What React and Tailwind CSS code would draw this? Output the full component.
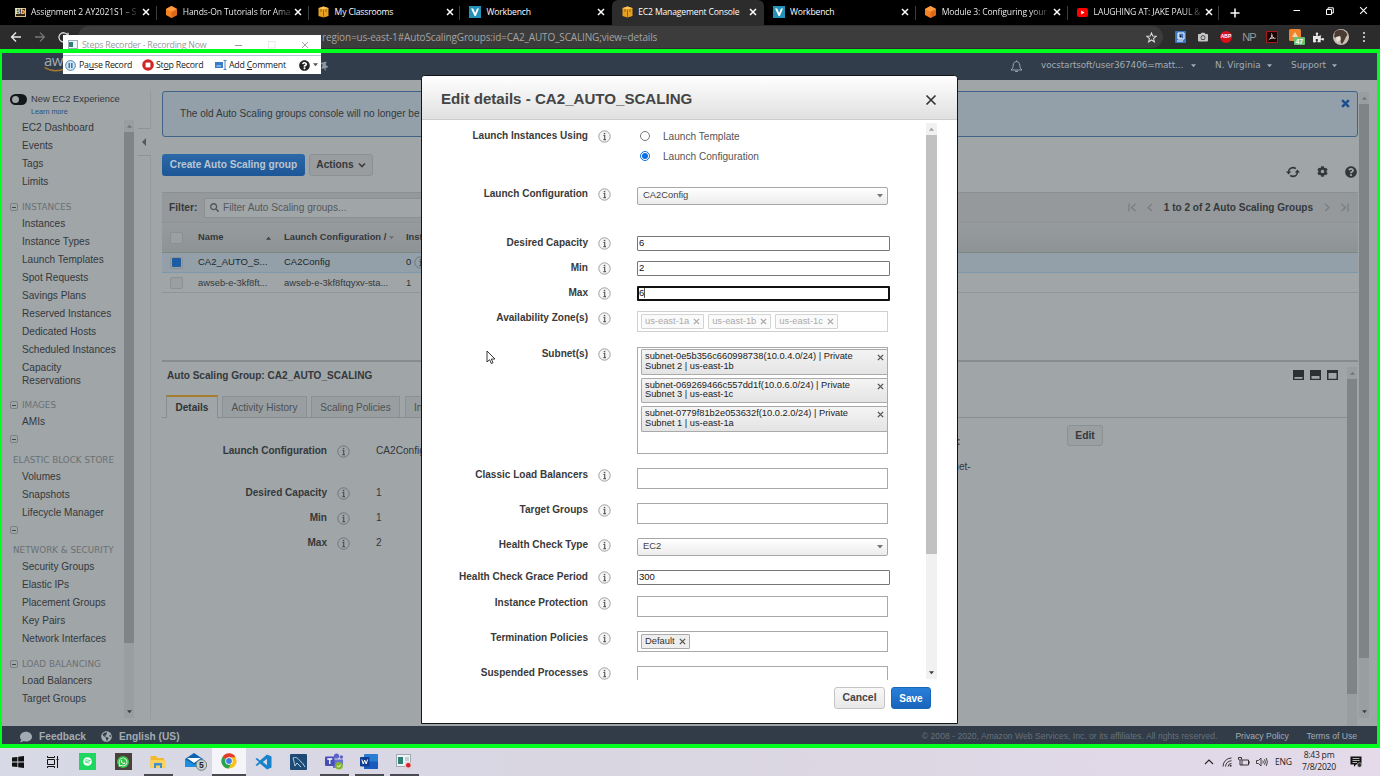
import React from "react";
import { FaSearch, FaCog, FaQuestionCircle, FaComment, FaGlobeAmericas, FaPuzzlePiece, FaCamera, FaWhatsapp, FaThumbtack, FaSpotify } from "react-icons/fa";

const SvgX = ({ s = 8, w = 1.4, c = "#fff" }) => (
  <svg width={s} height={s} viewBox="0 0 8 8" className="shrink-0"><path d="M1 1L7 7M7 1L1 7" stroke={c} strokeWidth={w} fill="none" /></svg>
);
const Caret = ({ c = "#666", up, w = 6 }) => (
  <svg width={w} height="4" viewBox="0 0 6 4" className="shrink-0"><path d={up ? "M0 4L3 0.5L6 4Z" : "M0 0L3 3.5L6 0Z"} fill={c} /></svg>
);
const Chevron = ({ c = "#9aa3ab", s = 7 }) => (
  <svg width={s} height={s} viewBox="0 0 8 8" className="shrink-0"><path d="M1 2.5L4 5.5L7 2.5" stroke={c} strokeWidth="1.6" fill="none" /></svg>
);
const Info = ({ dim }) => (
  <svg width="13" height="13" viewBox="0 0 13 13" className="shrink-0">
    <circle cx="6.5" cy="6.5" r="5.7" fill={dim ? "none" : "#f6f6f6"} stroke={dim ? "#6b7074" : "#949494"} strokeWidth="0.9" />
    <path d="M5.4 5.5H6.7V9.6M5.4 9.6H8" stroke={dim ? "#4c5053" : "#585858"} strokeWidth="1.15" fill="none" />
    <rect x="5.8" y="2.9" width="1.5" height="1.4" fill={dim ? "#4c5053" : "#585858"} />
  </svg>
);

/* ---------- browser tabs ---------- */
const BbIcon = () => (
  <span className="flex h-[9px] w-[11px] items-center justify-center border border-[#d8c08a] bg-[#30250f] font-['Liberation_Serif',serif] text-[8px] font-bold leading-none text-[#f4e6c2]">Bb</span>
);
const HexIcon = () => (
  <svg width="11" height="12" viewBox="0 0 11 12"><path d="M5.5 0L11 3V9L5.5 12L0 9V3Z" fill="#f58220" /><path d="M0 3L5.5 6L11 3L5.5 0Z" fill="#ff9b3d" /><path d="M5.5 6V12L11 9V3Z" fill="#e0661a" /></svg>
);
const CubeIcon = () => (
  <svg width="11" height="12" viewBox="0 0 11 12"><path d="M5.5 0.5L10.5 2V10L5.5 11.5L0.5 10V2Z" fill="#e8a020" /><path d="M0.5 2.2L5.5 3.6L10.5 2.2L5.5 0.6Z" fill="#ffc45a" /><path d="M5.5 3.6V11.4M3 3V6M8 3V6" stroke="#7a4b00" strokeWidth="0.7" /></svg>
);
const VIcon = () => (
  <svg width="12" height="12" viewBox="0 0 12 12"><rect width="12" height="12" fill="#2492b8" /><path d="M2 2.5H4.2L6.2 7L8 2.5H10L6.8 10H5.6Z" fill="#fff" /></svg>
);
const YtIcon = () => (
  <svg width="11" height="9" viewBox="0 0 11 9"><rect width="11" height="9" rx="2" fill="#f00" /><path d="M4.2 2.5L7.5 4.5L4.2 6.5Z" fill="#fff" /></svg>
);
const TABS = [
  [BbIcon, "Assignment 2 AY2021S1 – S", "fade"], [HexIcon, "Hands-On Tutorials for Ama", "fade"], [CubeIcon, "My Classrooms"], [VIcon, "Workbench"],
  [CubeIcon, "EC2 Management Console", "on"], [VIcon, "Workbench"], [HexIcon, "Module 3: Configuring your", "fade"], [YtIcon, "LAUGHING AT: JAKE PAUL &", "fade"],
];

function TabBar() {
  return (
    <div className="flex h-[25px] shrink-0 bg-black pl-[5px] font-['Open_Sans',sans-serif] text-white">
      {TABS.map(([Icon, t, kind], i) => (
        <div key={i} className={"flex w-[151.8px] items-center " + (kind === "on" ? "rounded-t-md bg-[#2c2c2c]" : "")}>
          <div className="flex w-full items-center pl-[9px]">
            <div className="flex w-[12px] justify-center"><Icon /></div>
            <div className="ml-[5px] w-[108px]">
              <span className={"block w-fit whitespace-nowrap text-[8.6px] tracking-[-0.16px] " + (kind === "fade" ? "bg-linear-to-r from-white from-85% to-[#333] bg-clip-text text-transparent" : "")}>{t}</span>
            </div>
            <div className="ml-[3px]"><SvgX s={8} w={1.5} /></div>
          </div>
          {kind !== "on" && i !== 3 && <div className="h-[14px] w-px shrink-0 bg-[#3c3c3c]" />}
        </div>
      ))}
      <div className="flex items-center pl-[11px]">
        <svg width="10" height="10" viewBox="0 0 10 10"><path d="M5 0.5V9.5M0.5 5H9.5" stroke="#fff" strokeWidth="1.5" /></svg>
      </div>
      <div className="ml-auto flex h-[21px] items-center gap-[25px] pr-[12px]">
        <svg width="8" height="8" viewBox="0 0 8 8"><path d="M0.5 3.5H7" stroke="#fff" /></svg>
        <svg width="8" height="8" viewBox="0 0 8 8"><path d="M0.5 2.5H5.5V7.5H0.5ZM2 2.5V0.8H7.3V6H5.5" stroke="#fff" fill="none" /></svg>
        <SvgX s={9} w={1} />
      </div>
    </div>
  );
}

function Toolbar() {
  return (
    <div className="flex h-[24px] shrink-0 items-center bg-[#2c2c2c]">
      <div className="flex w-[78px] items-center gap-[12px] pl-[10px]">
        <svg width="12" height="12" viewBox="0 0 12 12"><path d="M11 6H2M6 1.6L1.6 6L6 10.4" stroke="#e8e8e8" strokeWidth="1.4" fill="none" /></svg>
        <svg width="12" height="12" viewBox="0 0 12 12"><path d="M1 6H10M6 1.6L10.4 6L6 10.4" stroke="#777" strokeWidth="1.3" fill="none" /></svg>
        <svg width="11" height="11" viewBox="0 0 11 11"><path d="M9.5 3A4.6 4.6 0 1 0 10 6.5M10 0.8V3.8H7" stroke="#ddd" strokeWidth="1.3" fill="none" /></svg>
      </div>
      <div className="flex h-[22px] w-[1085px] items-center rounded-full bg-[#3c3c3c]">
        <span className="ml-[244px] whitespace-nowrap pt-px font-['Open_Sans',sans-serif] text-[10px] tracking-[-0.15px] text-[#a3a3a3]">region=us-east-1#AutoScalingGroups:id=CA2_AUTO_SCALING;view=details</span>
        <svg className="ml-auto mr-[6px]" width="11" height="11" viewBox="0 0 12 12"><path d="M6 1L7.4 4.5L11.2 4.7L8.2 7.1L9.2 10.8L6 8.7L2.8 10.8L3.8 7.1L0.8 4.7L4.6 4.5Z" stroke="#ddd" strokeWidth="1.1" fill="none" /></svg>
      </div>
      <div className="flex items-center pl-[11px]">
        <div className="flex w-[12px] justify-center"><svg width="11" height="12" viewBox="0 0 11 12"><rect width="11" height="12" rx="1" fill="#3a74c4" /><path d="M3 2H9V8H3ZM2 10H8" stroke="#fff" fill="none" /><path d="M4 2V7H7" stroke="#fff" /></svg></div>
        <div className="ml-[11px] flex w-[12px] justify-center"><FaCamera size={10} color="#c4c4c4" /></div>
        <div className="ml-[11px] flex h-[12px] w-[12px] items-center justify-center rounded-full bg-[#d8101c] font-['Liberation_Sans',sans-serif] text-[5px] font-bold text-white">ABP</div>
        <div className="ml-[11px] flex w-[12px] justify-center font-['Liberation_Sans_Narrow','Liberation_Sans',sans-serif] text-[11px] tracking-[-1px] text-[#9a9a9a]">NP</div>
        <div className="ml-[11px] flex w-[12px] justify-center"><svg width="12" height="12" viewBox="0 0 12 12"><rect x="0.5" y="0.5" width="11" height="11" fill="#1c0404" stroke="#a01818" /><path d="M5.5 2.5C7 5 4 8 2.8 9M5.8 4C6 6.5 8 7.5 9.5 7.3M4 7.5L8 6.8" stroke="#eee" strokeWidth="0.9" fill="none" /></svg></div>
        <div className="ml-[10px] flex w-[17px] justify-center"><svg width="17" height="16" viewBox="0 0 17 16"><rect x="1" y="0" width="12" height="12" rx="1.5" fill="#f0822a" /><path d="M4 8L7 3L10 8Z" fill="#fbd4ae" /><rect x="6" y="8" width="11" height="8" rx="1" fill="#6fbf73" /><text x="7.4" y="14.6" fontSize="7" fontFamily="Liberation Sans, sans-serif" fontWeight="bold" fill="#fff">47</text></svg></div>
        <div className="ml-[7px] flex w-[12px] justify-center"><FaPuzzlePiece size={11} color="#e6e6e6" /></div>
        <svg className="ml-[9px]" width="16" height="16" viewBox="0 0 16 16"><circle cx="8" cy="8" r="8" fill="#c9beb4" /><path d="M2 3C6 -1 13 1 14.5 6C12 8 12 12 9 15C6 13 9 9 7 7C5 9 3 9 1 8Z" fill="#4a3a32" /><path d="M3 8L7 7L7.5 11L4 13Z" fill="#ece4dc" /></svg>
        <svg className="ml-[13px]" width="4" height="12" viewBox="0 0 4 12"><circle cx="2" cy="2" r="1.1" fill="#ddd" /><circle cx="2" cy="6" r="1.1" fill="#ddd" /><circle cx="2" cy="10" r="1.1" fill="#ddd" /></svg>
      </div>
    </div>
  );
}

/* ---------- console page ---------- */
function AwsHeader() {
  return (
    <div className="flex h-[31px] shrink-0 items-center bg-[#313d4b] pt-[3px] font-['DejaVu_Sans',sans-serif] text-[8.9px] text-[#a3abb2]">
      <div className="flex w-[320px] flex-col pl-[44px]">
        <span className="mt-[-6px] font-['Open_Sans',sans-serif] text-[15px] leading-[13px] tracking-[-0.5px]">aws</span>
        <svg width="24" height="5" viewBox="0 0 24 5"><path d="M0.5 0.5Q10 6.5 22 1.5" stroke="#a4792f" strokeWidth="1.4" fill="none" /></svg>
      </div>
      <FaThumbtack size={9} className="-rotate-12" color="#8d98a2" />
      <svg className="ml-[681px] shrink-0" width="13" height="13" viewBox="0 0 13 13"><path d="M1 10H12C10 8.5 10 7 9.8 5.2C9.6 3 8.4 1.6 6.5 1.6S3.4 3 3.2 5.2C3 7 3 8.5 1 10ZM5.2 11.5H7.8M6.5 0.5V1.6" stroke="#a3abb2" fill="none" /></svg>
      <span className="ml-[18px] w-[150px] whitespace-nowrap tracking-[-0.12px]">vocstartsoft/user367406=matt...</span><Caret c="#a3abb2" w={5} />
      <span className="ml-[19px] w-[52px] whitespace-nowrap">N. Virginia</span><Caret c="#a3abb2" w={5} />
      <span className="ml-[19px] w-[41px]">Support</span><Caret c="#a3abb2" w={5} />
    </div>
  );
}

const Minus = () => (
  <span className="flex h-[8px] w-[8px] shrink-0 items-center justify-center rounded-[2px] border border-[#7b8083]"><span className="h-px w-[4px] bg-[#44484b]" /></span>
);
const Head = ({ children, h = "h-[24px]" }) => (
  <div className={"flex items-end " + h}><div className="flex h-[15px] items-center gap-[4px] font-['DejaVu_Sans',sans-serif] text-[8.8px] text-[#6b7073]"><Minus />{children}</div></div>
);
const HeadSplit = ({ children, h }) => (
  <>
    <div className="flex h-[18px] items-center pb-px"><Minus /></div>
    <div className={"flex items-center whitespace-nowrap pl-[3px] pt-[4px] font-['DejaVu_Sans',sans-serif] text-[8.8px] text-[#6b7073] " + h}>{children}</div>
  </>
);
const SideItem = ({ children }) => <div className="flex h-[18px] items-center whitespace-nowrap pl-[12px]">{children}</div>;

function Scroll({ track = "bg-[#9a9ea1]", thumb = "bg-[#7f8487]", h, up = "#6f7477", down = "#3c4043", w = "w-[10px]", showDown = true }) {
  return (
    <div className={"flex shrink-0 flex-col items-center " + w + " " + track}>
      <div className="flex h-[12px] items-center"><Caret up c={up} w={5} /></div>
      <div className={"w-full " + thumb + " " + h} />
      {showDown && <div className="mt-auto flex h-[12px] items-center"><Caret c={down} w={5} /></div>}
    </div>
  );
}

function SideList() {
  return (
    <div className="w-[114px] pt-[0.6px] text-[10.1px] text-[#34383b]">
      {["EC2 Dashboard", "Events", "Tags", "Limits"].map((t) => <SideItem key={t}>{t}</SideItem>)}
      <Head>INSTANCES</Head>
      {["Instances", "Instance Types", "Launch Templates", "Spot Requests", "Savings Plans", "Reserved Instances", "Dedicated Hosts", "Scheduled Instances"].map((t) => <SideItem key={t}>{t}</SideItem>)}
      <div className="h-[31px] pl-[12px] pt-[2px] leading-[13px]">Capacity<br />Reservations</div>
      <Head h="h-[23px]">IMAGES</Head>
      <SideItem>AMIs</SideItem>
      <HeadSplit h="h-[19px]">ELASTIC BLOCK STORE</HeadSplit>
      {["Volumes", "Snapshots", "Lifecycle Manager"].map((t) => <SideItem key={t}>{t}</SideItem>)}
      <HeadSplit h="h-[18px]">NETWORK &amp; SECURITY</HeadSplit>
      {["Security Groups", "Elastic IPs", "Placement Groups", "Key Pairs", "Network Interfaces"].map((t) => <SideItem key={t}>{t}</SideItem>)}
      <Head>LOAD BALANCING</Head>
      {["Load Balancers", "Target Groups"].map((t) => <SideItem key={t}>{t}</SideItem>)}
    </div>
  );
}

function Nav() {
  return (
    <div className="flex w-[134px] shrink-0 flex-col pl-[10px]">
      <div className="flex h-[38px] shrink-0 flex-col pt-[12px]">
        <div className="flex h-[15px] items-center">
          <div className="flex h-[11px] w-[17px] items-center rounded-full bg-[#15181b] p-[2px]"><div className="h-[7px] w-[7px] rounded-full bg-[#a0a5a8]" /></div>
          <span className="ml-[4px] whitespace-nowrap text-[9.35px]">New EC2 Experience</span>
        </div>
        <span className="ml-[21px] text-[7.2px] leading-[10px] text-[#27517e]">Learn more</span>
      </div>
      <div className="flex h-[600px]">
        <SideList />
        <div className="flex pt-[2px]"><Scroll h="h-[511px]" /></div>
      </div>
    </div>
  );
}

const Field = ({ label, value, h }) => (
  <div className={"flex items-start " + h}>
    <span className="w-[165px] text-right text-[10.05px] font-bold leading-[14px]">{label}</span>
    <div className="ml-[10px] mt-[1px]"><Info dim /></div>
    <span className="ml-[26px] text-[10.1px] leading-[14px]">{value}</span>
  </div>
);

const WinIcon = ({ y }) => (
  <svg width="11" height="10" viewBox="0 0 11 10"><rect width="11" height="10" fill="#2c3033" /><rect x="1.5" y={y} width="8" height={8.8 - y} fill="#a0a5a8" /></svg>
);

function Main() {
  return (
    <div className="flex w-[1196px] shrink-0 flex-col pt-[11px]">
      <div className="flex h-[46px] shrink-0 items-center rounded-[3px] border border-[#3f6488] bg-[#93a0a9] pl-[17px]">
        <span className="whitespace-nowrap text-[10.1px]">The old Auto Scaling groups console will no longer be</span>
        <div className="ml-auto mr-[7px] self-start pt-[7px]"><SvgX s={9} w={2.2} c="#1c4f90" /></div>
      </div>
      <div className="flex h-[55px] shrink-0 items-center pt-px">
        <div className="flex h-[22px] w-[143px] items-center justify-center whitespace-nowrap rounded-[3px] bg-linear-to-b from-[#2c69a8] to-[#1d5696] text-[10.15px] font-bold text-[#b9c6d2]">Create Auto Scaling group</div>
        <div className="ml-[4px] flex h-[22px] w-[64px] items-center justify-center gap-[4px] rounded-[3px] border border-[#8c9194] bg-[#999da0] text-[10.2px] font-bold">Actions<Chevron c="#3a3e41" s={8} /></div>
        <div className="ml-auto flex items-center text-[#33373a]">
          <div className="flex items-center gap-[17px] pr-px pt-[13px]">
            <svg width="14" height="12" viewBox="0 0 14 12"><path d="M2.6 6A4.5 4.5 0 0 1 7 1.6Q8.6 1.6 9.8 2.6M11.4 6A4.5 4.5 0 0 1 7 10.4Q5.4 10.4 4.2 9.4" stroke="#33373a" strokeWidth="1.6" fill="none" /><path d="M0 5.6L2.6 8.6L5.2 5.6ZM8.8 6.4L11.4 3.4L14 6.4Z" fill="#33373a" /></svg>
            <FaCog size={11} /><FaQuestionCircle size={12} />
          </div>
        </div>
      </div>
      <div className="flex h-[30px] shrink-0 items-center border-t border-[#8b9093] bg-[#95999c] pl-[7px]">
        <span className="w-[35px] text-[10.2px] font-bold">Filter:</span>
        <div className="flex h-[20px] w-[350px] items-center gap-[4px] rounded-[2px] border border-[#8b9093] bg-[#a0a5a8] pl-[5px] text-[#53585b]"><FaSearch size={9} /><span className="text-[10.1px]">Filter Auto Scaling groups...</span></div>
        <div className="ml-auto flex items-center pr-[9px]">
          <svg width="9" height="9" viewBox="0 0 9 9"><path d="M1 0.5V8.5M7.5 1L3.5 4.5L7.5 8" stroke="#777c7f" strokeWidth="1.2" fill="none" /></svg>
          <svg className="ml-[9px]" width="9" height="9" viewBox="0 0 9 9"><path d="M6 1L2 4.5L6 8" stroke="#777c7f" strokeWidth="1.2" fill="none" /></svg>
          <span className="ml-[9px] whitespace-nowrap text-[10.05px] font-bold">1 to 2 of 2 Auto Scaling Groups</span>
          <svg className="ml-[9px]" width="9" height="9" viewBox="0 0 9 9"><path d="M3 1L7 4.5L3 8" stroke="#777c7f" strokeWidth="1.2" fill="none" /></svg>
          <svg className="ml-[9px]" width="9" height="9" viewBox="0 0 9 9"><path d="M8 0.5V8.5M1.5 1L5.5 4.5L1.5 8" stroke="#777c7f" strokeWidth="1.2" fill="none" /></svg>
        </div>
      </div>
      <div className="flex h-[31px] shrink-0 items-center border-y border-t-[#8d9295] border-b-[#7f8487] bg-linear-to-b from-[#979b9e] to-[#8e9396] text-[9.35px] font-bold">
        <div className="ml-[8px] h-[12px] w-[13px] rounded-[2px] border border-[#8b9093] bg-[#9ba0a3]" />
        <span className="ml-[15px] w-[68px]">Name</span><Caret up c="#3c4043" w={5} />
        <span className="ml-[13px] w-[105px] whitespace-nowrap">Launch Configuration /</span><Caret c="#6a6f72" w={5} />
        <span className="ml-[12px]">Instances</span>
      </div>
      <div className="flex h-[20px] shrink-0 items-center border-b border-[#7f98ab] bg-[#93a0a9] text-[9.5px] text-[#22272b]">
        <div className="ml-[8px] flex h-[12px] w-[13px] items-center justify-center rounded-[2px] border border-[#8b9093]"><div className="h-[9px] w-[9px] rounded-[1px] bg-[#1c5ca3]" /></div>
        <span className="ml-[15px] w-[86px] whitespace-nowrap">CA2_AUTO_S...</span><span className="w-[122px]">CA2Config</span><span className="w-[8px]">0</span><Info dim />
      </div>
      <div className="flex h-[20px] shrink-0 items-center border-b border-[#90959a] pt-px text-[9.4px]">
        <div className="ml-[8px] h-[12px] w-[13px] rounded-[2px] border border-[#8b9093] bg-[#9a9fa2]" />
        <span className="ml-[15px] w-[86px] whitespace-nowrap">awseb-e-3kf8ft...</span><span className="w-[122px] whitespace-nowrap">awseb-e-3kf8ftqyxv-sta...</span><span>1</span>
      </div>
      <div className="h-[67px] shrink-0" />
      <div className="h-[2px] shrink-0 bg-[#868b8e]" />
      <div className="flex min-h-0 flex-1">
        <div className="flex w-[1185px] flex-col">
          <div className="flex h-[32px] items-center pl-[5px] pr-[9px]">
            <span className="pb-[5px] text-[10.05px] font-bold">Auto Scaling Group: CA2_AUTO_SCALING</span>
            <div className="ml-auto flex gap-[6px] pb-[6px]"><WinIcon y={7} /><WinIcon y={6} /><WinIcon y={3} /></div>
          </div>
          <div className="flex h-[24px] items-end border-b border-[#888d90] pl-[4px] text-[10.05px] text-[#4c5154]">
            <div className="-mb-px flex h-[23px] w-[52px] items-center justify-center border border-b-0 border-t-2 border-[#888d90] border-t-[#a57c2e] bg-[#a0a5a8] font-bold text-[#2f3336]">Details</div>
            <div className="ml-[4px] flex h-[21px] w-[85px] items-center justify-center whitespace-nowrap border border-b-0 border-[#8b9093] bg-[#999ea1] pt-px">Activity History</div>
            <div className="ml-[4px] flex h-[21px] w-[89px] items-center justify-center whitespace-nowrap border border-b-0 border-[#8b9093] bg-[#999ea1] pt-px">Scaling Policies</div>
            <div className="ml-[5px] flex h-[21px] w-[64px] items-center border border-b-0 border-[#8b9093] bg-[#999ea1] pl-[8px] pt-px">Instances</div>
          </div>
          <div className="flex justify-between pt-[7px]">
            <div className="pt-[19px]">
              <Field label="Launch Configuration" value="CA2Config" h="h-[42px]" />
              <Field label="Desired Capacity" value="1" h="h-[25px]" />
              <Field label="Min" value="1" h="h-[25px]" />
              <Field label="Max" value="2" h="h-[25px]" />
            </div>
            <div className="flex pr-[244px]">
              <div className="flex w-[133px] flex-col pt-[10px] text-[10.1px]">
                <span className="pl-[23px] font-bold leading-[14px]">:</span>
                <span className="mt-[11px] pl-[3px] leading-[14px]">subnet-</span>
              </div>
              <div className="flex h-[21px] w-[36px] items-center justify-center rounded-[3px] border border-[#8c9194] bg-[#9a9fa2] text-[10.3px] font-bold">Edit</div>
            </div>
          </div>
        </div>
        <div className="flex pt-[5px]"><Scroll h="h-[315px]" showDown={false} /></div>
      </div>
    </div>
  );
}

function Console() {
  return (
    <div className="flex h-[646px] shrink-0 bg-[#a0a5a8] font-['Liberation_Sans',sans-serif] text-[#34383b]">
      <Nav />
      <div className="flex w-[28px] shrink-0 flex-col pl-[4px] pt-[11px]">
        <div className="h-[37px] w-[13px] border-r border-[#959a9d]" />
        <div className="flex h-[28px] w-[13px] items-center border-y border-[#8f9497] pl-[4px]"><svg width="4" height="8" viewBox="0 0 4 8"><path d="M4 0V8L0 4Z" fill="#55595c" /></svg></div>
        <div className="h-[563px] w-[13px] border-r border-[#959a9d]" />
      </div>
      <Main />
      <div className="flex h-[638px] pl-px pt-[12px]"><Scroll h="h-[554px]" /></div>
    </div>
  );
}

function Footer() {
  return (
    <div className="flex h-[22px] shrink-0 items-start bg-[#313c48] pt-[2px] font-['Liberation_Sans',sans-serif]">
      <div className="flex h-[17px] w-full items-center text-[10.2px] font-bold text-[#a3abb2]">
        <FaComment size={12} className="ml-[20px]" /><span className="ml-[7px] w-[62px]">Feedback</span>
        <FaGlobeAmericas size={11} /><span className="ml-[7px]">English (US)</span>
        <span className="ml-auto whitespace-nowrap text-[8.65px] font-normal text-[#66717b]">© 2008 - 2020, Amazon Web Services, Inc. or its affiliates. All rights reserved.</span>
        <span className="ml-[18px] w-[71px] whitespace-nowrap text-[8.6px] font-normal">Privacy Policy</span>
        <span className="mr-[23px] whitespace-nowrap text-[8.6px] font-normal">Terms of Use</span>
      </div>
    </div>
  );
}

/* ---------- dialog ---------- */
const Row = ({ label, h, children }) => (
  <div className={"flex shrink-0 items-start " + h}>
    <span className="w-[165px] whitespace-nowrap pt-[0.6px] text-right text-[10.05px] font-bold leading-[16px] text-[#3a3a3a]">{label}</span>
    <div className="ml-[10px] mt-[2.5px]"><Info /></div>
    <div className="ml-[26px] mt-px w-[253px]">{children}</div>
  </div>
);
const Select = ({ children }) => (
  <div className="flex h-[18px] w-[251px] items-center justify-between rounded-[2px] border border-[#a8a8a8] bg-linear-to-b from-white to-[#ececec] pl-[5px] pr-[4px] text-[9.4px] text-[#444]"><span className="pb-px">{children}</span><Caret c="#777" w={6} /></div>
);
const Input = ({ children, focus }) => (
  <div className={"flex h-[15px] w-[253px] items-center rounded-[1px] bg-white text-[9.5px] text-[#111] " + (focus ? "border-2 border-[#111]" : "border border-[#767676] pl-px")}>{children}{focus && <span className="h-[10px] w-px bg-[#555]" />}</div>
);
const Box = ({ children, dim }) => (
  <div className={"flex h-[21px] w-[251px] items-center gap-[4px] border bg-white pl-[3px] " + (dim ? "border-[#d0d0d0]" : "border-[#aaa]")}>{children}</div>
);
const Tag = ({ children, dim }) => (
  <div className={"flex h-[15px] items-center gap-[4px] rounded-[1px] border pl-[3px] pr-[3px] text-[9.35px] " + (dim ? "border-[#d4d4d4] bg-[#fafafa] text-[#aaa]" : "border-[#aaa] bg-[#eee] text-[#333]")}>{children}<SvgX s={7} w={1.5} c={dim ? "#aaa" : "#555"} /></div>
);
const Subnet = ({ a, b }) => (
  <div className="flex h-[25.5px] w-[247px] shrink-0 items-start justify-between rounded-[1px] border border-[#aaa] bg-linear-to-b from-[#f4f4f4] to-[#e4e4e4] pl-[3px] pr-[3px] pt-[2.4px] text-[9.3px] leading-[9.5px] text-[#222]">
    <div className="whitespace-nowrap">{a}<br />{b}</div>
    <div className="pt-[2px]"><SvgX s={7} w={1.6} c="#555" /></div>
  </div>
);
const Radio = ({ on }) => (
  <div className={"flex h-[10px] w-[10px] items-center justify-center rounded-full border " + (on ? "border-[#0a6fe0]" : "border-[#767676]")}>{on && <div className="h-[6px] w-[6px] rounded-full bg-[#0a6fe0]" />}</div>
);

function Dialog() {
  return (
    <div className="absolute left-[421px] top-[75px] flex h-[649px] w-[537px] flex-col rounded-t-[4px] border border-[#10151a] bg-white font-['Liberation_Sans',sans-serif]">
      <div className="flex h-[44px] shrink-0 items-center justify-between rounded-t-[3px] border-b border-[#ccc] bg-linear-to-b from-white to-[#e0e0e0] pl-[19px] pr-[20px] pt-[4px]">
        <span className="whitespace-nowrap text-[15.1px] font-bold text-[#444]">Edit details - CA2_AUTO_SCALING</span>
        <SvgX s={12} w={1.1} c="#333" />
      </div>
      <div className="flex h-[560px] shrink-0 overflow-hidden">
        <div className="flex w-[504px] flex-col pl-px pt-[7.5px]">
          <Row label="Launch Instances Using" h="h-[58px]">
            <div className="flex flex-col gap-[4px] pl-[3px] text-[10.1px] leading-[16px] text-[#555]">
              <div className="flex items-center"><div className="mb-[2px]"><Radio /></div><span className="ml-[13px]">Launch Template</span></div>
              <div className="flex items-center"><div className="mb-[2px]"><Radio on /></div><span className="ml-[13px]">Launch Configuration</span></div>
            </div>
          </Row>
          <Row label="Launch Configuration" h="h-[49px]"><Select>CA2Config</Select></Row>
          <Row label="Desired Capacity" h="h-[25px]"><Input>6</Input></Row>
          <Row label="Min" h="h-[25px]"><Input>2</Input></Row>
          <Row label="Max" h="h-[25px]"><Input focus>6</Input></Row>
          <Row label="Availability Zone(s)" h="h-[36px]"><Box dim><Tag dim>us-east-1a</Tag><Tag dim>us-east-1b</Tag><Tag dim>us-east-1c</Tag></Box></Row>
          <Row label="Subnet(s)" h="h-[121px]">
            <div className="flex h-[107px] w-[251px] flex-col gap-[3px] border border-[#aaa] bg-white pl-[3px] pt-[1.5px]">
              <Subnet a="subnet-0e5b356c660998738(10.0.4.0/24) | Private" b="Subnet 2 | us-east-1b" />
              <Subnet a="subnet-069269466c557dd1f(10.0.6.0/24) | Private" b="Subnet 3 | us-east-1c" />
              <Subnet a="subnet-0779f81b2e053632f(10.0.2.0/24) | Private" b="Subnet 1 | us-east-1a" />
            </div>
          </Row>
          <Row label="Classic Load Balancers" h="h-[35px]"><Box /></Row>
          <Row label="Target Groups" h="h-[35px]"><Box /></Row>
          <Row label="Health Check Type" h="h-[32px]"><Select>EC2</Select></Row>
          <Row label="Health Check Grace Period" h="h-[26px]"><Input>300</Input></Row>
          <Row label="Instance Protection" h="h-[35px]"><Box /></Row>
          <Row label="Termination Policies" h="h-[35px]"><Box><Tag>Default</Tag></Box></Row>
          <Row label="Suspended Processes" h="h-[35px]"><Box /></Row>
        </div>
        <div className="flex h-[559px] pt-[3px]"><Scroll w="w-[11px]" track="bg-[#f1f1f1]" thumb="bg-[#c1c1c1]" h="h-[419px]" up="#a0a0a0" down="#404040" /></div>
      </div>
      <div className="flex items-center justify-end gap-[6px] pr-[26px] pt-[7px]">
        <div className="flex h-[22px] w-[51px] items-center justify-center rounded-[3px] border border-[#c4c4c4] bg-linear-to-b from-[#f8f8f8] to-[#e8e8e8] text-[10.4px] font-bold text-[#444]">Cancel</div>
        <div className="flex h-[22px] w-[40px] items-center justify-center rounded-[3px] border border-[#1a66b8] bg-linear-to-b from-[#2a7fd8] to-[#1864bc] text-[10px] font-bold text-white">Save</div>
      </div>
    </div>
  );
}

/* ---------- steps recorder window ---------- */
function Recorder() {
  return (
    <div className="absolute left-[63px] top-[35px] flex h-[39px] w-[258px] flex-col bg-white font-['Open_Sans',sans-serif]">
      <div className="flex h-[21px] items-center border-b border-[#b5c4d4] pl-[5px] text-[8.8px] text-[#9a9a9a]">
        <svg width="10" height="10" viewBox="0 0 10 10"><rect x="0.5" y="0.5" width="9" height="8" fill="#eef4f8" stroke="#9ab" /><rect x="1" y="2" width="4" height="5" fill="#2f7f74" /></svg>
        <span className="ml-[4px] whitespace-nowrap pt-px tracking-[-0.25px]">Steps Recorder - Recording Now</span>
        <svg className="ml-auto mr-[25px]" width="8" height="8" viewBox="0 0 8 8"><path d="M0 4.5H7" stroke="#999" /></svg>
        <svg className="mr-[25px]" width="8" height="8" viewBox="0 0 8 8"><rect x="0.5" y="0.5" width="6.5" height="6.5" fill="none" stroke="#e8e8e8" /></svg>
        <div className="mr-[12px]"><SvgX s={8} w={0.9} c="#999" /></div>
      </div>
      <div className="flex h-[18px] items-center whitespace-nowrap pl-[2px] text-[8.8px] tracking-[-0.22px] text-[#1a1a1a]">
        <svg width="11" height="11" viewBox="0 0 11 11"><circle cx="5.5" cy="5.5" r="4.9" fill="#d4e6f4" stroke="#4a86b4" /><path d="M4.2 3V8M6.8 3V8" stroke="#2a6ca4" strokeWidth="1.4" /></svg>
        <span className="ml-[3px] w-[63px] pt-[2px]">Pa<u>u</u>se Record</span>
        <svg width="12" height="12" viewBox="0 0 12 12"><circle cx="6" cy="6" r="5.8" fill="#cf2626" /><rect x="3.6" y="3.6" width="4.8" height="4.8" fill="#fff" /></svg>
        <span className="ml-[2px] w-[59px] pt-[2px]">St<u>o</u>p Record</span>
        <svg width="12" height="10" viewBox="0 0 12 10"><rect y="2" width="8" height="6" fill="#3a7cc8" /><path d="M10 0.5V9.5M8.5 0.5H11.5M8.5 9.5H11.5" stroke="#4a88c0" /><path d="M1.5 6H6" stroke="#cfe0f4" /></svg>
        <span className="ml-[2px] w-[70px] pt-[2px]">Add <u>C</u>omment</span>
        <FaQuestionCircle size={11} color="#222" /><span className="ml-[3px]"><Caret c="#555" w={5} /></span>
      </div>
    </div>
  );
}

/* ---------- taskbar ---------- */
const Slot = ({ children, run }) => (
  <div className="flex h-[28px] w-[35.2px] flex-col items-center">
    <div className="flex h-[26px] items-center pt-[1px]">{children}</div>
    {run && <div className="h-[2px] w-[29px] bg-[#4a4a52]" />}
  </div>
);

function Taskbar() {
  return (
    <div className="flex h-[28px] shrink-0 bg-linear-to-r from-[#d8d9e6] via-[#dad6e2] to-[#e4daea]">
      <Slot><svg width="12" height="12" viewBox="0 0 12 12"><path d="M0 1.6L5.4 0.9V5.6H0ZM6.2 0.8L12 0V5.6H6.2ZM0 6.4H5.4V11.1L0 10.4ZM6.2 6.4H12V12L6.2 11.2Z" fill="#111" /></svg></Slot>
      <Slot><svg width="13" height="12" viewBox="0 0 13 12"><path d="M1.5 3.5H8.5V8.5H1.5ZM1.5 0V1.5H8.5V0M1.5 12V10.5H8.5V12M11.5 0V12M10.5 3.5H12.5" stroke="#111" fill="none" /></svg></Slot>
      <Slot><div className="flex h-[17px] w-[17px] items-center justify-center bg-[#1ed760]"><FaSpotify size={9} color="#fff" /></div></Slot>
      <Slot><div className="flex h-[17px] w-[17px] items-center justify-center bg-[#4a403e]"><span className="flex h-[12px] w-[12px] items-center justify-center rounded-full bg-[#35c24a]"><FaWhatsapp size={10} color="#fff" /></span></div></Slot>
      <Slot run><svg width="16" height="14" viewBox="0 0 16 14"><path d="M0.5 1H6L7.5 3H14V13H0.5Z" fill="#f5b92e" /><path d="M0.5 5H15.5V13H0.5Z" fill="#fbd25c" /><path d="M4 8H12V13H10V10.5H6V13H4Z" fill="#3f8fd4" /></svg></Slot>
      <Slot><svg width="26" height="19" viewBox="0 0 26 19"><path d="M4 7L13 1L22 7V15H4Z" fill="#0d64b0" /><path d="M6 6H20L13 11Z" fill="#fff" /><path d="M4 7L13 12.5L22 7V15H4Z" fill="#1e8fe0" /><circle cx="20.4" cy="13" r="5.3" fill="#c9d3d4" stroke="#6f7c7c" /><text x="18" y="16.2" fontSize="8.5" fontFamily="Liberation Sans, sans-serif" fontWeight="bold" fill="#222">5</text></svg></Slot>
      <div className="ml-[1px] flex h-[28px] w-[34px] flex-col items-center bg-[#f5f4f8]">
        <div className="flex h-[26px] items-center"><svg width="16" height="16" viewBox="0 0 16 16"><circle cx="8" cy="8" r="7.6" fill="#fbc116" /><path d="M8 8L1.4 4.2A7.6 7.6 0 0 1 14.6 4.2H8Z" fill="#e33b2e" /><path d="M8 8L1.4 4.2A7.6 7.6 0 0 0 7.4 15.6L10.8 10Z" fill="#2ba24c" /><circle cx="8" cy="8" r="3.7" fill="#fff" /><circle cx="8" cy="8" r="2.9" fill="#3f7de8" /></svg></div>
        <div className="h-[2px] w-full bg-[#4a4a52]" />
      </div>
      <Slot><svg width="17" height="16" viewBox="0 0 17 16"><path d="M12 0.5L16.5 2.5V13.5L12 15.5L5 9.5L2 12L0.5 11L4 8L0.5 5L2 4L5 6.5ZM12 4.8L7.8 8L12 11.2Z" fill="#1683cc" fillRule="evenodd" /></svg></Slot>
      <Slot><svg width="17" height="16" viewBox="0 0 17 16"><rect width="17" height="16" rx="1" fill="#1d4b74" /><path d="M3 4C7 2 9 6 11 8C13 9 13 10 15 13M3 4C4 7 4 8 5 12L7 9L11 13" stroke="#b8d4e6" fill="none" /></svg></Slot>
      <Slot run><svg width="19" height="17" viewBox="0 0 19 17"><circle cx="11.5" cy="3" r="2.6" fill="#5c62c8" /><circle cx="16.3" cy="4" r="1.8" fill="#5c62c8" /><path d="M8 6.5H18V12Q16 15 12 15H8Z" fill="#6a70d4" /><rect y="3.5" width="9.5" height="9.5" rx="1" fill="#464eb8" /><path d="M2.3 6H7.3M4.8 6V11" stroke="#fff" strokeWidth="1.3" /><circle cx="14" cy="12.8" r="3.8" fill="#84b82c" /><path d="M12.2 12.8L13.6 14.1L15.8 11.7" stroke="#fff" fill="none" /></svg></Slot>
      <Slot run><svg width="18" height="15" viewBox="0 0 18 15"><rect x="4" width="14" height="15" rx="1" fill="#2b7cd3" /><rect x="4" y="7.5" width="14" height="7.5" rx="1" fill="#185abd" /><rect y="3" width="9.5" height="9.5" rx="1" fill="#103f91" /><path d="M1.8 5.5L3.2 10L4.7 6L6.2 10L7.6 5.5" stroke="#fff" fill="none" /></svg></Slot>
      <Slot run><svg width="16" height="15" viewBox="0 0 16 15"><rect x="0.5" y="0.5" width="14" height="12" fill="#eef3f5" stroke="#a0a8b0" /><rect x="2" y="3" width="5" height="7" fill="#2c8074" /><path d="M9 4H13M9 6H13" stroke="#9aa" /><circle cx="12.3" cy="11.3" r="3.6" fill="#e8c8cc" /><circle cx="12.3" cy="11.3" r="2.3" fill="#d42030" /></svg></Slot>
      <div className="ml-auto flex items-center font-['Open_Sans',sans-serif] text-[8.6px] tracking-[-0.25px] text-[#1c1c1c]">
        <svg width="10" height="6" viewBox="0 0 10 6"><path d="M1 5L5 1L9 5" stroke="#222" strokeWidth="1.1" fill="none" /></svg>
        <svg className="ml-[8px]" width="10" height="10" viewBox="0 0 10 10"><path d="M1 9.5A8.5 8.5 0 0 1 9.5 1M3.5 9.5A6 6 0 0 1 9.5 3.8M6 9.5A3.5 3.5 0 0 1 9.5 6.5" stroke="#333" fill="none" /><circle cx="8.6" cy="8.8" r="1" fill="#333" /></svg>
        <svg className="ml-[6px]" width="12" height="10" viewBox="0 0 12 10"><path d="M4 3H10.5V8H4ZM11.3 4.5V6.5M0.5 0.5V2.5Q2 4 3.5 2.5V0.5ZM2 3.5V8H4" stroke="#333" fill="none" /></svg>
        <svg className="ml-[6px]" width="12" height="10" viewBox="0 0 12 10"><path d="M0.5 3.5H2.5L5 1V9L2.5 6.5H0.5ZM6.8 3.5Q7.8 5 6.8 6.5M8.5 2.3Q10.2 5 8.5 7.7M10.2 1Q12.6 5 10.2 9" stroke="#333" fill="none" strokeWidth="0.9" /></svg>
        <span className="ml-[7px] w-[27px]">ENG</span>
        <div className="flex w-[34px] flex-col items-center whitespace-nowrap pb-[2px] leading-[12.5px]"><span>8:43 pm</span><span>7/8/2020</span></div>
        <svg className="ml-[14px] mr-[18px]" width="12" height="12" viewBox="0 0 12 12"><path d="M0.5 0.5H11.5V8.5H6L4 11V8.5H0.5Z" fill="#111" /><path d="M2.5 2.5H9.5M2.5 4.5H9.5M2.5 6.5H7" stroke="#ddd" strokeWidth="0.8" /><circle cx="9.5" cy="9" r="2.3" fill="#333" stroke="#ddd" strokeWidth="0.6" /></svg>
      </div>
    </div>
  );
}

export default function App() {
  return (
    <div className="relative flex h-[776px] w-[1380px] flex-col overflow-hidden">
      <TabBar />
      <Toolbar />
      <AwsHeader />
      <Console />
      <Footer />
      <Taskbar />
      <Dialog />
      <Recorder />
      <svg className="absolute left-[486px] top-[350px]" width="10" height="15" viewBox="0 0 10 15"><path d="M1 1V12L3.6 9.6L5.3 13.5L7 12.8L5.4 9H9Z" fill="#fff" stroke="#222" strokeWidth="0.9" /></svg>
      <div className="pointer-events-none absolute left-0 top-[49px] h-[699px] w-[1380px] border-4 border-l-2 border-r-3 border-[#00ff1e]" />
    </div>
  );
}
